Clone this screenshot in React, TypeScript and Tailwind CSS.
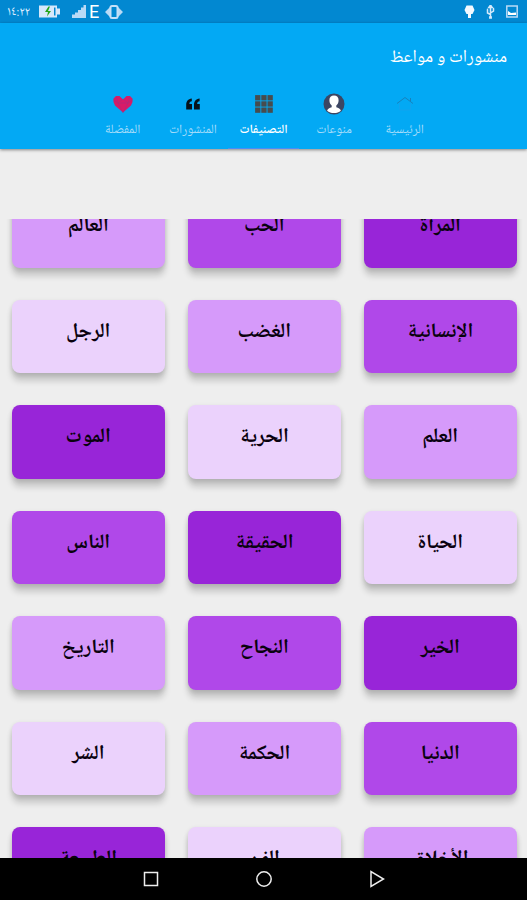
const categories = [
  { name: "المرأة", shade: "bg-[#9825d8]" },
  { name: "الحب", shade: "bg-[#b048e9]" },
  { name: "العالم", shade: "bg-[#d69afa]" },
  { name: "الإنسانية", shade: "bg-[#b048e9]" },
  { name: "الغضب", shade: "bg-[#d69afa]" },
  { name: "الرجل", shade: "bg-[#ebd2fc]" },
  { name: "العلم", shade: "bg-[#d69afa]" },
  { name: "الحرية", shade: "bg-[#ebd2fc]" },
  { name: "الموت", shade: "bg-[#9825d8]" },
  { name: "الحياة", shade: "bg-[#ebd2fc]" },
  { name: "الحقيقة", shade: "bg-[#9825d8]" },
  { name: "الناس", shade: "bg-[#b048e9]" },
  { name: "الخير", shade: "bg-[#9825d8]" },
  { name: "النجاح", shade: "bg-[#b048e9]" },
  { name: "التاريخ", shade: "bg-[#d69afa]" },
  { name: "الدنيا", shade: "bg-[#b048e9]" },
  { name: "الحكمة", shade: "bg-[#d69afa]" },
  { name: "الشر", shade: "bg-[#ebd2fc]" },
  { name: "الأخلاق", shade: "bg-[#d69afa]" },
  { name: "الفن", shade: "bg-[#ebd2fc]" },
  { name: "الطبيعة", shade: "bg-[#9825d8]" },
];

function HomeIcon() {
  return (
    <svg width="20" height="20" viewBox="0 0 20 20" fill="none">
      <path d="M2 9.500 10 3.500 18 9.500M15.500 4v3.500" stroke="#1782bd" strokeWidth="1" />
      <path d="M4.500 9.500v6.500h11V9.500" stroke="#12a3ee" strokeWidth="1" />
    </svg>
  );
}

function PersonIcon() {
  return (
    <svg width="22" height="22" viewBox="0 0 22 22">
      <circle cx="11" cy="11" r="10.500" fill="#3c4663" />
      <path
        d="M11 2.500c-3 0-4.600 2-4.600 4.800 0 2.500 1 4.200 2.300 5.200v1.700c-2 .6-4.200 1.300-4.600 3.600 1.800 1.700 4.200 2.300 6.900 2.300s5.100-.6 6.900-2.300c-.4-2.300-2.600-3-4.600-3.600v-1.700c1.300-1 2.300-2.700 2.300-5.200C15.600 4.500 14 2.500 11 2.500z"
        fill="#fff"
      />
    </svg>
  );
}

function GridIcon() {
  return (
    <svg width="18" height="18" viewBox="0 0 18 18" fill="#474c4e">
      {[0, 6.2, 12.4].map((y) =>
        [0, 6.2, 12.4].map((x) => (
          <rect key={`${x}-${y}`} x={x + 0.1} y={y + 0.1} width="5.300" height="5.300" />
        ))
      )}
    </svg>
  );
}

function QuoteIcon() {
  return (
    <svg width="14" height="12" viewBox="0 0 14 12" fill="#06121a">
      <path d="M5.800.5C2 .8.200 3.500.200 7v4.500h5.800V6H3.400c0-1.700.8-2.400 2.400-2.700z" />
      <path d="M13.600.5C9.800.8 8 3.500 8 7v4.500h5.800V6H11.200c0-1.700.8-2.400 2.400-2.700z" />
    </svg>
  );
}

function HeartIcon() {
  return (
    <svg width="20" height="18" viewBox="0 0 20 18">
      <path
        d="M10 17.500 2 10.500.5 7V3.500L3 1h3.500L10 4.500 13.500 1H17l2.500 2.500V7L18 10.500z"
        fill="#d81b67"
      />
      <path
        d="M.5 5 5 8l5-4 5 4 4.500-3M5 8l5 9.500L15 8M5 8l-1.500-6M15 8l1.500-6M5 8h10"
        fill="none"
        stroke="#a92c80"
        strokeWidth=".6"
      />
    </svg>
  );
}

const tabs = [
  { label: "الرئيسية", icon: <HomeIcon /> },
  { label: "منوعات", icon: <PersonIcon /> },
  { label: "التصنيفات", icon: <GridIcon />, active: true },
  { label: "المنشورات", icon: <QuoteIcon /> },
  { label: "المفضلة", icon: <HeartIcon /> },
];

function StatusBar() {
  return (
    <div className="flex h-[23px] shrink-0 items-center justify-between bg-[#0288d1] pr-[9px] pl-[7px] text-[#dcecff]">
      <div className="flex items-center">
        <span className="w-[24px] text-[13px] leading-[20px] whitespace-nowrap">١٤:٢٢</span>
        <svg className="ml-[8px]" width="21" height="13" viewBox="0 0 21 13">
          <path d="M0 .5h18v3h3v6h-3v3H0z" fill="#d6e8fb" />
          <path d="M15 2.500h1.500v8H15z" fill="#0288d1" />
          <path d="M9.500 1.500 6 7h3l-1 4.500L12 6H9l2-4.500z" fill="#25a51c" />
        </svg>
        <svg className="ml-[12px]" width="14" height="13" viewBox="0 0 14 13" fill="#b9daf6">
          <path d="M0 9.500h3V13H0zM3 7.500h3V13H3zM6 5h3v8H6zM9 2.500h2.500V13H9zM11.500 0H14v13h-2.500z" />
        </svg>
        <span className="ml-[3px] font-['Roboto',sans-serif] text-[18px] leading-[20px] text-white">E</span>
        <svg className="ml-[6px]" width="18" height="14" viewBox="0 0 18 14">
          <path d="M5 2v10L0 7zM13 2v10l5-5z" fill="#b9daf6" />
          <rect x="5.500" y="1" width="7" height="12" rx="1.500" fill="#0288d1" stroke="#c5e0f8" strokeWidth="2" />
        </svg>
      </div>
      <div className="flex items-center gap-[11px]">
        <svg width="11" height="14" viewBox="0 0 11 14" fill="#f2f9ff">
          <path d="M2.500.5h6L10.500 5l-2 4H7v4H4V9H2.500L.5 5z" />
        </svg>
        <svg width="9" height="14" viewBox="0 0 9 14" fill="none" stroke="#d5eafc" strokeWidth="1.500">
          <path d="M4.500 2v10M4.500 9.500 1.500 8V5M4.500 8l3-2V4" />
          <path d="m4.500 0 1.700 2.500H2.800zM3.800 12h1.400v1H3.800zM.8 4.500h1.400M6.800 3.500h1.400" />
        </svg>
        <svg width="12" height="13" viewBox="0 0 12 13">
          <rect x=".8" y="1" width="10.400" height="11" fill="none" stroke="#b9daf6" strokeWidth="1.500" />
          <path d="m2 6 3 2 5-.5V10H2z" fill="#fff" />
        </svg>
      </div>
    </div>
  );
}

export default function App() {
  return (
    <div
      dir="ltr"
      className="flex h-[900px] w-[527px] flex-col overflow-hidden bg-[#eeeeee] font-['Noto_Naskh_Arabic_UI','Noto_Naskh_Arabic','Droid_Arabic_Naskh','DejaVu_Sans',sans-serif]"
    >
      <StatusBar />
      <header className="z-10 flex h-[126px] shrink-0 flex-col bg-[#03a9f4] shadow-[0_1px_3px_rgba(0,0,0,0.45)]" dir="rtl">
        <h1 className="pt-[21px] pr-[20px] text-[17.700px] leading-[26px] text-white">
          منشورات و مواعظ
        </h1>
        <nav className="mx-auto mt-auto flex h-[60px]">
          {tabs.map((tab) => (
            <button
              key={tab.label}
              className={
                tab.active
                  ? "flex w-[70.500px] flex-col items-center border-b border-[#4a8df6] text-white"
                  : "flex w-[70.500px] flex-col items-center border-b border-transparent text-[#a5dcfa]"
              }
            >
              <span className="flex h-[30px] items-center justify-center">{tab.icon}</span>
              <span
                className={
                  tab.active
                    ? "text-[12.700px] leading-[22px] font-semibold whitespace-nowrap"
                    : "text-[13px] leading-[22px] whitespace-nowrap"
                }
              >
                {tab.label}
              </span>
            </button>
          ))}
        </nav>
      </header>

      <main className="mt-[70px] min-h-0 flex-1 overflow-hidden" dir="rtl">
        <div className="-mt-[25px] grid grid-cols-3 gap-x-[23.500px] gap-y-8 pr-[10.500px] pl-[12px]">
          {categories.map((category) => (
            <div
              key={category.name}
              className={`h-[73.500px] rounded-[8px] pt-[18px] text-center shadow-[0_8px_6px_rgba(0,0,0,0.16),0_2px_5px_rgba(0,0,0,0.14)] ${category.shade}`}
            >
              <span className="block text-[20.500px] leading-[29px] font-bold text-[#0a020f]">
                {category.name}
              </span>
            </div>
          ))}
        </div>
      </main>

      <footer className="z-10 flex h-[42px] shrink-0 items-center justify-center gap-[97px] bg-black">
        <svg width="16" height="16" viewBox="0 0 16 16" fill="none" stroke="#eee" strokeWidth="1.500">
          <rect x="1.500" y="1.500" width="13" height="13" />
        </svg>
        <svg width="16" height="16" viewBox="0 0 16 16" fill="none" stroke="#eee" strokeWidth="1.500">
          <circle cx="8" cy="8" r="7.200" />
        </svg>
        <svg width="16" height="18" viewBox="0 0 16 18" fill="none" stroke="#eee" strokeWidth="1.500">
          <path d="M2 1.500v15L14.500 9z" />
        </svg>
      </footer>
    </div>
  );
}
